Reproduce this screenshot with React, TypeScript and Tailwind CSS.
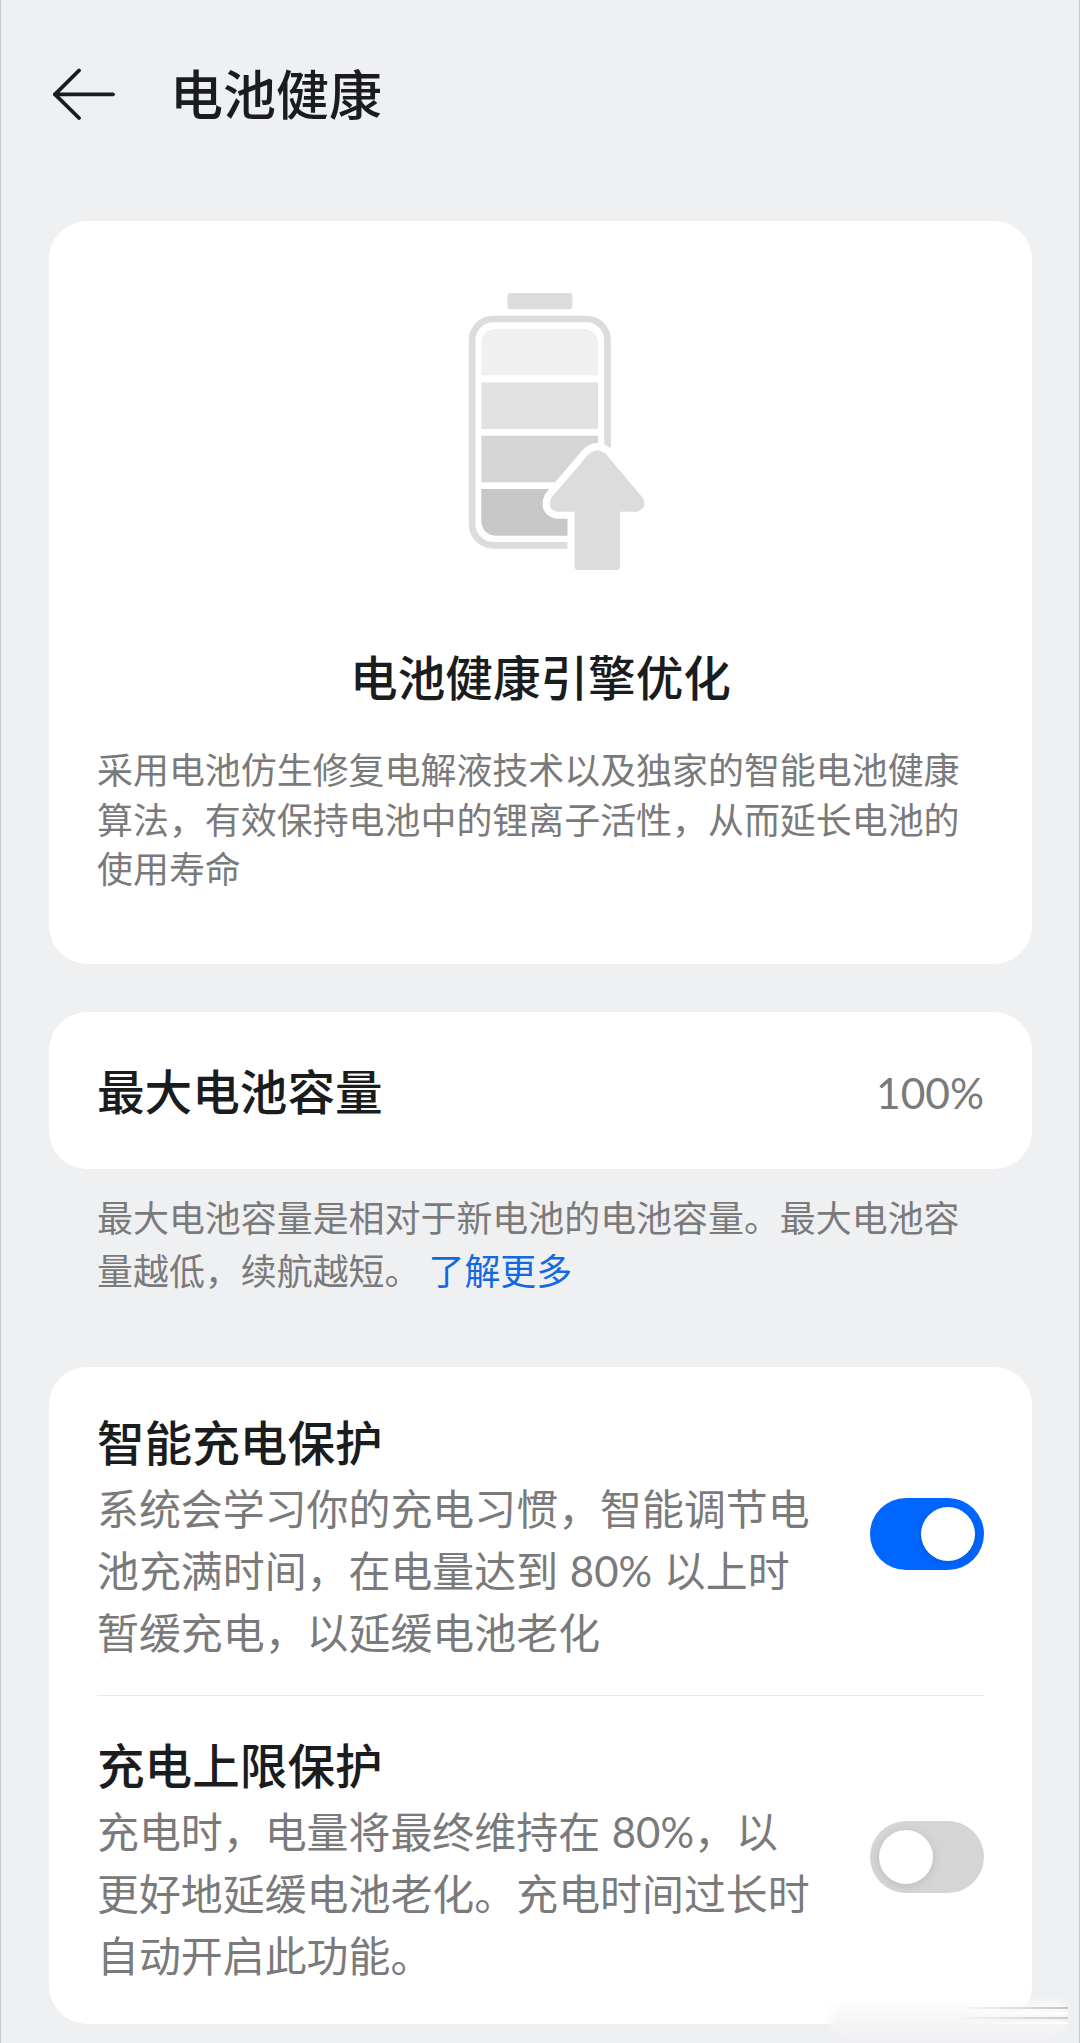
import { useState } from 'react';

interface SwitchProps {
  checked: boolean;
  onChange: (checked: boolean) => void;
  label: string;
}

interface SettingRowProps extends SwitchProps {
  lines: string[];
  divider?: boolean;
}

function BackIcon() {
  return (
    <svg width="64" height="52" viewBox="0 0 64 52" fill="none" stroke="#1b1c1e" strokeWidth="3.8" strokeLinecap="round" strokeLinejoin="round">
      <path d="M27 2.5 L3 26.3 L27 50" />
      <path d="M3 26.3 H61" />
    </svg>
  );
}

function BatteryIllustration() {
  const arrow =
    'M447 551 Q472 530 497 551 L608 683 Q624 714 592 725 H540 V890 Q540 900 530 900 H414 Q404 900 404 890 V725 H351 Q319 717 334 683 Z';

  return (
    <svg width="220" height="300" viewBox="-27 0 660 900">
      <rect x="202" y="69" width="195" height="49" rx="10" fill="#dcdcdc" />
      <rect x="96.5" y="147" width="406" height="679" rx="63" fill="none" stroke="#dcdcdc" strokeWidth="20" />
      <path d="M124 316 V218 Q126 180 170 176 H430 Q472 180 474 218 V316 Z" fill="#f0f0f0" />
      <rect x="124" y="337" width="350" height="140" fill="#e2e2e2" />
      <rect x="124" y="497" width="350" height="140" fill="#d5d5d5" />
      <path d="M124 657 H474 V755 Q470 797 430 797 H170 Q128 795 124 755 Z" fill="#c7c7c7" />
      <path d={arrow} fill="#fff" stroke="#fff" strokeWidth="43" strokeLinejoin="round" />
      <path d={arrow} fill="#dcdcdc" />
    </svg>
  );
}

function Switch({ checked, onChange, label }: SwitchProps) {
  return (
    <button
      role="switch"
      aria-checked={checked}
      aria-label={label}
      onClick={() => onChange(!checked)}
      className={`flex h-[72px] w-[114px] shrink-0 items-center rounded-full px-[9px] ${
        checked ? 'justify-end bg-[#0066ff]' : 'justify-start bg-[#d5d5d5]'
      }`}
    >
      <span className="size-[54px] rounded-full bg-white shadow-[0_2px_10px_rgba(0,0,0,0.12)]" />
    </button>
  );
}

function SettingRow({ label, lines, checked, onChange, divider }: SettingRowProps) {
  return (
    <div className={`flex h-[323px] items-center justify-between ${divider ? 'border-b border-[#e6e6e8]' : 'pb-[2px]'}`}>
      <div className="flex h-full flex-col pt-[40px]">
        <h3 className="text-[47.6px] leading-[60px] font-medium text-[#1b1c1e]">{label}</h3>
        <p className="mt-[6px] text-[41.93px] leading-[61.8px] text-[#7a7a7b]">
          {lines.map((line) => (
            <span key={line} className="block whitespace-nowrap [word-spacing:1px]">{line}</span>
          ))}
        </p>
      </div>
      <Switch checked={checked} onChange={onChange} label={label} />
    </div>
  );
}

export default function App() {
  const [smartCharge, setSmartCharge] = useState(true);
  const [chargeLimit, setChargeLimit] = useState(false);

  return (
    <div className="relative h-[2043px] w-[1080px] overflow-hidden border-x border-[#c9cacc] bg-[#eff0f2] px-[48px] font-[Lato,'Noto_Sans_CJK_SC',sans-serif]">
      {/* Header */}
      <header className="flex h-[221px] items-start pt-[63px]">
        <button aria-label="返回" className="mt-[5px] ml-[3px]">
          <BackIcon />
        </button>
        <h1 className="ml-[54px] text-[53px] leading-[64px] font-medium text-[#1b1c1e]">电池健康</h1>
      </header>

      <main>
        <section className="flex h-[743px] w-[983px] flex-col items-center rounded-[38px] bg-white px-[48px] pt-[49px]">
          <BatteryIllustration />
          <h2 className="mt-[78px] text-[47.6px] leading-[60px] font-medium text-[#1b1c1e]">电池健康引擎优化</h2>
          <p className="mt-[38px] self-start text-[35.95px] leading-[49.7px] whitespace-nowrap text-[#7a7a7b]">
            采用电池仿生修复电解液技术以及独家的智能电池健康
            <br />
            算法，有效保持电池中的锂离子活性，从而延长电池的
            <br />
            使用寿命
          </p>
        </section>

        <section className="mt-[48px] flex h-[157px] w-[983px] items-center justify-between rounded-[38px] bg-white px-[48px] pt-[2px]">
          <h2 className="text-[47.6px] leading-[60px] font-medium text-[#1b1c1e]">最大电池容量</h2>
          <span className="pt-[2px] text-[42.5px] text-[#7a7a7b]">100%</span>
        </section>

        <p className="mt-[24px] h-[174px] px-[48px] text-[35.95px] leading-[52.5px] whitespace-nowrap text-[#7a7a7b]">
          最大电池容量是相对于新电池的电池容量。最大电池容
          <br />
          量越低，续航越短。
          <a href="#more" className="ml-[8px] text-[#1269e0]">了解更多</a>
        </p>

        {/* Charging protection */}
        <section className="h-[657px] w-[983px] rounded-[38px] bg-white px-[48px] pt-[6px]">
          <SettingRow
            label="智能充电保护"
            lines={['系统会学习你的充电习惯，智能调节电', '池充满时间，在电量达到 80% 以上时', '暂缓充电，以延缓电池老化']}
            checked={smartCharge}
            onChange={setSmartCharge}
            divider
          />
          <SettingRow
            label="充电上限保护"
            lines={['充电时，电量将最终维持在 80%，以', '更好地延缓电池老化。充电时间过长时', '自动开启此功能。']}
            checked={chargeLimit}
            onChange={setChargeLimit}
          />
        </section>
      </main>

      {/* Soft highlight in the corner */}
      <div className="absolute right-[14px] bottom-[6px] h-[34px] w-[234px] bg-gradient-to-b from-[#fdfdfd] via-[#f6f6f7] to-[#eff0f2] blur-[5px]" />
      <div className="absolute right-[11px] bottom-[19px] flex h-[17px] w-[110px] flex-col justify-between blur-[0.6px]">
        <div className="h-[2px] bg-gradient-to-r from-transparent to-[#c4c4c6]" />
        <div className="h-[3px] bg-gradient-to-r from-transparent to-white" />
        <div className="h-[2px] bg-gradient-to-r from-transparent to-[#cacacc]" />
        <div className="h-[2px] bg-gradient-to-r from-transparent to-white" />
      </div>
    </div>
  );
}
